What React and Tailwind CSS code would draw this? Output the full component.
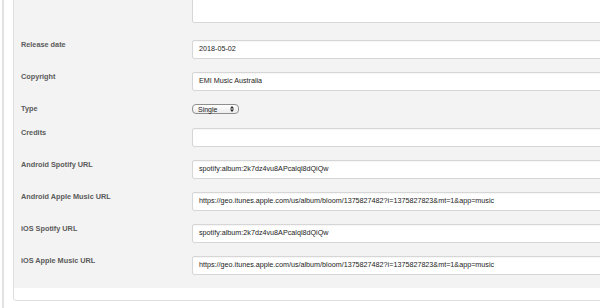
import React from 'react';

const FIELDS = [
  { label: 'Release date', value: '2018-05-02' },
  { label: 'Copyright', value: 'EMI Music Australia' },
  { label: 'Type', select: 'Single' },
  { label: 'Credits', value: '' },
  { label: 'Android Spotify URL', value: 'spotify:album:2k7dz4vu8APcalql8dQiQw' },
  { label: 'Android Apple Music URL', value: 'https://geo.itunes.apple.com/us/album/bloom/1375827482?i=1375827823&mt=1&app=music' },
  { label: 'iOS Spotify URL', value: 'spotify:album:2k7dz4vu8APcalql8dQiQw' },
  { label: 'iOS Apple Music URL', value: 'https://geo.itunes.apple.com/us/album/bloom/1375827482?i=1375827823&mt=1&app=music' },
];

function SelectBox({ value }) {
  return (
    <div className="w-[47px] h-[10px] rounded-[4px] border border-[#8f8f8f] bg-gradient-to-b from-white to-[#ececec] flex items-center justify-between pl-[5px] pr-[4px] text-[7px] leading-none text-[#222]">
      <span>{value}</span>
      <svg width="4" height="6" viewBox="0 0 4 6">
        <path d="M0 2.4 L2 0 L4 2.4 Z" fill="#222" />
        <path d="M0 3.6 L2 6 L4 3.6 Z" fill="#222" />
      </svg>
    </div>
  );
}

export default function App() {
  return (
    <div
      className="w-[600px] h-[308px] overflow-hidden bg-white flex pl-[2px]"
      style={{ fontFamily: '"Liberation Sans", Arial, Helvetica, sans-serif' }}
    >
      {/* left rule */}
      <div className="w-[2px] h-full bg-[#e2e2e2] shrink-0" />

      {/* form card */}
      <div className="ml-[9px] -mt-[31px] w-[640px] shrink-0 self-start bg-white border border-[#dedede] rounded-b-[3px] pb-[12px]">
        <div className="bg-[#f3f3f3] pt-[10px] pb-[13px] flex flex-col gap-[13px]">
          {/* description textarea (cut off at top) */}
          <div className="flex mb-[4px]">
            <div className="w-[178px] shrink-0" />
            <div className="flex-1 h-[43px] bg-white border border-[#d6d6d6] rounded-[2px]" />
          </div>

          {FIELDS.map((f) => (
            <div key={f.label} className="flex items-start">
              <div className="w-[178px] shrink-0 pl-[7px] text-[7.3px] font-bold text-[#5a5a5a] leading-normal">
                {f.label}
              </div>
              {f.select ? (
                <SelectBox value={f.select} />
              ) : (
                <div className="flex-1 h-[19px] bg-white border border-[#d6d6d6] rounded-[2px] shadow-[inset_0_1px_1px_rgba(0,0,0,0.04)] flex items-center pl-[6px] text-[7.2px] text-[#222] whitespace-nowrap">
                  {f.value}
                </div>
              )}
            </div>
          ))}
        </div>
      </div>
    </div>
  );
}
